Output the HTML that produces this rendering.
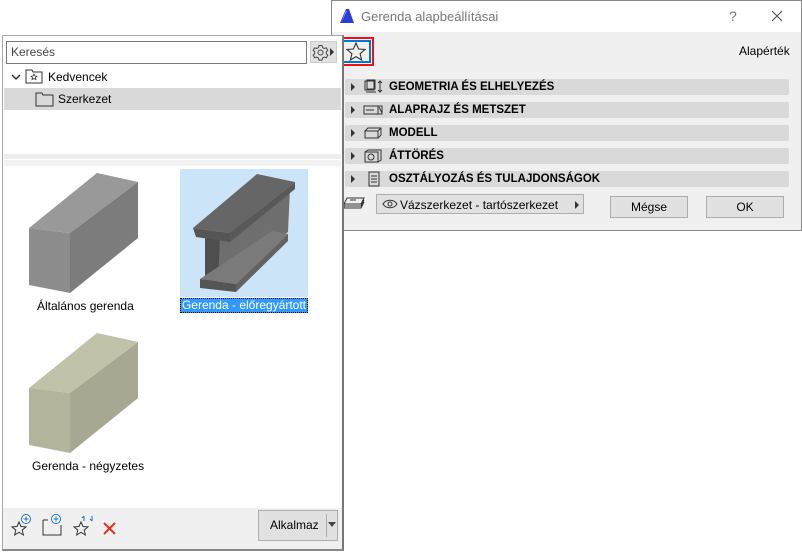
<!DOCTYPE html>
<html><head><meta charset="utf-8">
<style>
*{box-sizing:border-box;margin:0;padding:0}
body{width:802px;height:552px;background:#fff;position:relative;overflow:hidden;font-family:"Liberation Sans",sans-serif;font-size:12px;color:#000}
.abs{position:absolute}
.sec{position:absolute;left:345px;width:444px;height:16px;background:#d9d9d9;border-radius:2px;font-weight:bold;font-size:11.5px;line-height:16px}
.sec .tri{position:absolute;left:6px;top:4px;width:0;height:0;border-left:4px solid #333;border-top:4px solid transparent;border-bottom:4px solid transparent}
.sec .t{position:absolute;left:44px}
.sec svg{position:absolute;left:18px;top:0}
.btn{position:absolute;background:#e1e1e1;border:1px solid #adadad;text-align:center;font-size:12px}
</style></head><body>

<div class="abs" style="left:331px;top:0;width:471px;height:231px;border:1px solid #8a8a8a;background:#f0f0f0"></div>
<div class="abs" style="left:332px;top:1px;width:469px;height:31px;background:#fff"></div>
<svg class="abs" style="left:339px;top:8px" width="16" height="16"><rect width="16" height="16" fill="#fff"/><path d="M1 15 L7 1 L10 1 L15 15 Z" fill="#2a3dd8"/><path d="M2 15 L7 3 L8 3 Z" fill="#9db0ff"/></svg>
<div class="abs" style="left:361px;top:9px;font-size:13px;color:#777">Gerenda alapbeállításai</div>
<div class="abs" style="left:729px;top:8px;font-size:14px;color:#777">?</div>
<svg class="abs" style="left:771px;top:10px" width="12" height="12"><path d="M1 1L11 11M11 1L1 11" stroke="#555" stroke-width="1.2"/></svg>

<div class="abs" style="left:739px;top:44px;font-size:12px">Alapérték</div>

<div class="sec" style="top:79px"><div class="tri"></div><svg width="22" height="16"><rect x="2" y="2" width="9" height="9" fill="none" stroke="#333"/><rect x="4" y="1" width="8" height="9" fill="none" stroke="#333"/><path d="M3 13h10M17 2v11M15 4l2-2 2 2M15 11l2 2 2-2" stroke="#333" fill="none"/></svg><span class="t">GEOMETRIA ÉS ELHELYEZÉS</span></div>
<div class="sec" style="top:102px"><div class="tri"></div><svg width="22" height="16"><rect x="1" y="4" width="14" height="8" fill="none" stroke="#333"/><path d="M3 8h8M15 4h4v8h-4M16 5l3 6" stroke="#333" fill="none"/></svg><span class="t">ALAPRAJZ ÉS METSZET</span></div>
<div class="sec" style="top:125px"><div class="tri"></div><svg width="22" height="16"><path d="M2 6h13v7H2zM2 6l3-3h13v7l-3 3M15 6l3-3" stroke="#333" fill="none"/></svg><span class="t">MODELL</span></div>
<div class="sec" style="top:148px"><div class="tri"></div><svg width="22" height="16"><path d="M2 4h13v10H2zM2 4l3-2h13v10l-3 2" stroke="#333" fill="none"/><circle cx="8" cy="9" r="3" fill="none" stroke="#333"/></svg><span class="t">ÁTTÖRÉS</span></div>
<div class="sec" style="top:171px"><div class="tri"></div><svg width="22" height="16"><rect x="6" y="1" width="10" height="14" fill="none" stroke="#333"/><path d="M8 5h6M8 8h6M8 11h6" stroke="#333"/></svg><span class="t">OSZTÁLYOZÁS ÉS TULAJDONSÁGOK</span></div>

<svg class="abs" style="left:342px;top:196px" width="24" height="16"><path d="M5 2h17l-3 6H2z M2 8v2h17l3-6 M2 10v2h17l3-6" stroke="#333" fill="none"/><path d="M8 4h6" stroke="#333"/></svg>
<div class="btn" style="left:376px;top:194px;width:208px;height:20px;text-align:left"><svg class="abs" style="left:5px;top:4px" width="16" height="10"><path d="M1 5C4 0 12 0 15 5C12 10 4 10 1 5Z" fill="none" stroke="#333"/><circle cx="8" cy="5" r="2" fill="none" stroke="#333"/></svg><span class="abs" style="left:23px;top:3px">Vázszerkezet - tartószerkezet</span><span class="abs" style="left:198px;top:6px;border-left:4px solid #333;border-top:4px solid transparent;border-bottom:4px solid transparent"></span></div>
<div class="btn" style="left:610px;top:196px;width:78px;height:22px;line-height:20px">Mégse</div>
<div class="btn" style="left:706px;top:196px;width:78px;height:22px;line-height:20px">OK</div>

<div class="abs" style="left:339px;top:37px;width:35px;height:29px;border:2px solid #e8141b"></div>
<div class="abs" style="left:342px;top:40px;width:29px;height:23px;border:2px solid #0078d7;background:#f0f0f0"></div>
<svg class="abs" style="left:346px;top:42px" width="20" height="19"><path d="M10 1l2.6 6 6.4.5-4.9 4.2 1.5 6.3L10 14.6 4.4 18l1.5-6.3L1 7.5 7.4 7z" fill="none" stroke="#333" stroke-width="1.1"/></svg>

<div class="abs" style="left:2px;top:35px;width:342px;height:516px;border:1px solid #a8a8a8;border-right:2px solid #777;border-bottom:2px solid #888;background:#fff"></div>
<div class="abs" style="left:6px;top:41px;width:301px;height:23px;border:1px solid #7a7a7a;background:#fff;padding-left:4px;line-height:21px;color:#444">Keresés</div>
<div class="abs" style="left:310px;top:41px;width:27px;height:22px;background:#e1e1e1;border:1px solid #ccc"></div>
<svg class="abs" style="left:312px;top:44px" width="17" height="17"><circle cx="8.5" cy="8.5" r="2.5" fill="none" stroke="#444"/><path d="M7 1.5h3l.5 2 1.8 1 2-.7 1.5 2.6-1.5 1.4v2l1.5 1.4-1.5 2.6-2-.7-1.8 1-.5 2H7l-.5-2-1.8-1-2 .7-1.5-2.6 1.5-1.4v-2L1.2 6.4l1.5-2.6 2 .7 1.8-1z" fill="none" stroke="#444"/></svg>
<div class="abs" style="left:330px;top:48px;border-left:4px solid #333;border-top:4px solid transparent;border-bottom:4px solid transparent"></div>

<svg class="abs" style="left:10px;top:72px" width="12" height="10"><path d="M2 3l4 4 4-4" stroke="#333" stroke-width="1.5" fill="none"/></svg>
<svg class="abs" style="left:25px;top:68px" width="18" height="16"><path d="M1 2h6l1 2h9v11H1z" fill="#fff" stroke="#333"/><path d="M9 6l1 2 2 .2-1.5 1.4.5 2L9 10.5 7 11.6l.5-2L6 8.2 8 8z" fill="none" stroke="#333" stroke-width=".8"/></svg>
<div class="abs" style="left:48px;top:70px">Kedvencek</div>
<div class="abs" style="left:4px;top:88px;width:337px;height:22px;background:#d9d9d9"></div>
<svg class="abs" style="left:35px;top:91px" width="19" height="16"><path d="M1 2h6l1 2h10v11H1z" fill="none" stroke="#333"/></svg>
<div class="abs" style="left:58px;top:92px">Szerkezet</div>

<div class="abs" style="left:4px;top:154px;width:337px;height:5px;background:#ececec"></div>
<div class="abs" style="left:4px;top:160px;width:337px;height:6px;background:#f2f2f2"></div>

<svg class="abs" style="left:0;top:0" width="344" height="500">
<polygon points="29,228 97,173 138,182 70,233" fill="#999"/>
<polygon points="29,228 70,233 70,293 29,285" fill="#8c8c8c"/>
<polygon points="70,233 138,182 138,238 70,293" fill="#7c7c7c"/>
<rect x="180" y="169" width="128" height="128" fill="#cce4f7"/>
<polygon points="220,239 290,188 288,232 217,280" fill="#6e6e6e"/>
<polygon points="205,236 220,239 218,282 205,280" fill="#4e4e4e"/>
<polygon points="193,228 257,174 295,182 230,233" fill="#666"/>
<polygon points="230,233 295,182 295,189 230,242" fill="#595959"/>
<polygon points="193,228 230,233 230,242 196,237" fill="#555"/>
<polygon points="200,279 236,284 288,234 272,231" fill="#7a7a7a"/>
<polygon points="200,279 236,284 236,292 200,288" fill="#555"/>
<polygon points="236,284 288,234 288,241 236,292" fill="#626262"/>
<polygon points="29,388 97,333 138,342 70,393" fill="#c2c2ab"/>
<polygon points="29,388 70,393 70,453 29,445" fill="#b4b49c"/>
<polygon points="70,393 138,342 138,398 70,453" fill="#a8a892"/>
</svg>
<div class="abs" style="left:37px;top:299px">Általános gerenda</div>
<div class="abs" style="left:180px;top:298px;width:128px;height:15px;background:#3399ff;color:#fff;border:1px dotted #000;text-align:center;line-height:13px">Gerenda - előregyártott</div>
<div class="abs" style="left:32px;top:459px">Gerenda - négyzetes</div>

<div class="abs" style="left:3px;top:508px;width:339px;height:41px;background:#f0f0f0"></div>
<svg class="abs" style="left:10px;top:513px" width="110" height="26">
<path d="M9 9l2 4.5 5 .4-3.8 3.2 1.2 4.9L9 19.3 4.6 22l1.2-4.9L2 13.9l5-.4z" fill="none" stroke="#333"/>
<circle cx="16" cy="6" r="4.5" fill="#fff" stroke="#1a6fd6"/><path d="M16 3.5v5M13.5 6h5" stroke="#1a6fd6"/>
<path d="M33 7v15h18v-10" fill="none" stroke="#333"/><path d="M33 7h5" stroke="#333"/>
<circle cx="46" cy="6" r="4.5" fill="#fff" stroke="#1a6fd6"/><path d="M46 3.5v5M43.5 6h5" stroke="#1a6fd6"/>
<path d="M71 9l2 4.5 5 .4-3.8 3.2 1.2 4.9L71 19.3 66.6 22l1.2-4.9L64 13.9l5-.4z" fill="none" stroke="#333"/>
<path d="M74 8v-5M72 5l2-2M82 3v5M80 6l2 2" stroke="#1a6fd6" fill="none"/>
<path d="M94 10l11 11M105 10L94 21" stroke="#e8321b" stroke-width="2"/>
</svg>
<div class="abs" style="left:258px;top:510px;width:80px;height:31px;background:#e1e1e1;border:1px solid #adadad"></div>
<div class="abs" style="left:326px;top:514px;width:1px;height:23px;background:#adadad"></div>
<div class="abs" style="left:270px;top:518px">Alkalmaz</div>
<div class="abs" style="left:328px;top:522px;border-top:5px solid #444;border-left:4px solid transparent;border-right:4px solid transparent"></div>
</body></html>
